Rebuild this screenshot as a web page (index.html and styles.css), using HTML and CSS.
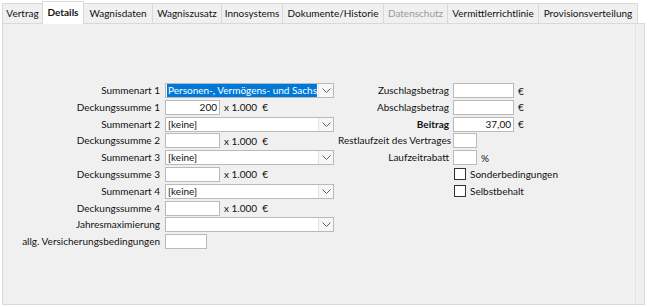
FILE: index.html
```html
<!DOCTYPE html>
<html lang="de">
<head>
<meta charset="utf-8">
<link rel="stylesheet" href="styles.css">
</head>
<body>
<div class="tabs">
  <div class="tab t1">Vertrag</div>
  <div class="tab active t2">Details</div>
  <div class="tab t3">Wagnisdaten</div>
  <div class="tab t4">Wagniszusatz</div>
  <div class="tab t5">Innosystems</div>
  <div class="tab t6">Dokumente/Historie</div>
  <div class="tab disabled t7">Datenschutz</div>
  <div class="tab t8">Vermittlerrichtlinie</div>
  <div class="tab t9">Provisionsverteilung</div>
</div>
<div class="panel">
  <div class="form">
    <div class="grid left">
      <label>Summenart 1</label>
      <div class="combo selected"><span class="val">Personen-, Vermögens- und Sachschäden</span><span class="btn"><svg width="9" height="5" viewBox="0 0 9 5"><path d="M0.5 0.5 L4.5 4.5 L8.5 0.5" fill="none" stroke="#606060" stroke-width="1"/></svg></span></div>
      <label>Deckungssumme 1</label>
      <div class="ctl"><div class="input num">200</div><span class="unit">x 1.000 &nbsp;€</span></div>
      <label>Summenart 2</label>
      <div class="combo"><span class="val">[keine]</span><span class="btn"><svg width="9" height="5" viewBox="0 0 9 5"><path d="M0.5 0.5 L4.5 4.5 L8.5 0.5" fill="none" stroke="#606060" stroke-width="1"/></svg></span></div>
      <label>Deckungssumme 2</label>
      <div class="ctl"><div class="input num"></div><span class="unit">x 1.000 &nbsp;€</span></div>
      <label>Summenart 3</label>
      <div class="combo"><span class="val">[keine]</span><span class="btn"><svg width="9" height="5" viewBox="0 0 9 5"><path d="M0.5 0.5 L4.5 4.5 L8.5 0.5" fill="none" stroke="#606060" stroke-width="1"/></svg></span></div>
      <label>Deckungssumme 3</label>
      <div class="ctl"><div class="input num"></div><span class="unit">x 1.000 &nbsp;€</span></div>
      <label>Summenart 4</label>
      <div class="combo"><span class="val">[keine]</span><span class="btn"><svg width="9" height="5" viewBox="0 0 9 5"><path d="M0.5 0.5 L4.5 4.5 L8.5 0.5" fill="none" stroke="#606060" stroke-width="1"/></svg></span></div>
      <label>Deckungssumme 4</label>
      <div class="ctl"><div class="input num"></div><span class="unit">x 1.000 &nbsp;€</span></div>
      <label>Jahresmaximierung</label>
      <div class="combo"><span class="val"></span><span class="btn"><svg width="9" height="5" viewBox="0 0 9 5"><path d="M0.5 0.5 L4.5 4.5 L8.5 0.5" fill="none" stroke="#606060" stroke-width="1"/></svg></span></div>
      <label>allg. Versicherungsbedingungen</label>
      <div class="ctl"><div class="input avb"></div></div>
    </div>
    <div class="grid right">
      <label>Zuschlagsbetrag</label>
      <div class="ctl"><div class="input amt"></div><span class="unit">€</span></div>
      <label>Abschlagsbetrag</label>
      <div class="ctl"><div class="input amt"></div><span class="unit">€</span></div>
      <label class="bold">Beitrag</label>
      <div class="ctl"><div class="input amt">37,00</div><span class="unit">€</span></div>
      <label>Restlaufzeit des Vertrages</label>
      <div class="ctl"><div class="input small"></div></div>
      <label>Laufzeitrabatt</label>
      <div class="ctl"><div class="input small"></div><span class="unit">%</span></div>
      <span></span>
      <div class="ctl check"><span class="box"></span><span>Sonderbedingungen</span></div>
      <span></span>
      <div class="ctl check"><span class="box"></span><span>Selbstbehalt</span></div>
    </div>
  </div>
</div>
</body>
</html>
```
FILE: styles.css
```css
* { box-sizing: border-box; }
html, body { margin: 0; padding: 0; background: #ffffff; }
body {
  font-family: Lato, "Open Sans", sans-serif;
  font-size: 10px;
  color: #111111;
  width: 648px;
  height: 307px;
  overflow: hidden;
}
.tabs {
  display: flex;
  align-items: flex-end;
  height: 23px;
  padding-left: 2px;
  position: relative;
  z-index: 1;
}
.tab {
  height: 20px;
  line-height: 19px;
  text-align: center;
  background: #f0f0f0;
  border: 1px solid #d9d9d9;
  border-bottom: none;
  border-left: none;
  white-space: nowrap;
  color: #111111;
}
.tab.t1 { width: 41px; border-left: 1px solid #d9d9d9; }
.tab.t2 { width: 40px; }
.tab.t3 { width: 69px; }
.tab.t4 { width: 69px; }
.tab.t5 { width: 61px; }
.tab.t6 { width: 101px; }
.tab.t7 { width: 64px; }
.tab.t8 { width: 91px; }
.tab.t9 { width: 99px; }
.tab.active {
  height: 23px;
  line-height: 21px;
  background: #ffffff;
  font-weight: 700;
  margin-bottom: -1px;
  border-left: 1px solid #d9d9d9;
  margin-left: -1px;
  width: 42px;
}
.tab.disabled { color: #9a9a9a; }
.panel {
  margin: 0 3px 0 2px;
  height: 282px;
  background: #f0f0f0;
  border: 1px solid #d9d9d9;
  box-shadow: inset -8px 0 0 #f0f0f0, inset -9px 0 0 #e3e3e3;
}
.form {
  display: flex;
  padding-top: 59px;
}
.grid {
  display: grid;
  grid-auto-rows: 15px;
  row-gap: 1.8px;
  align-items: center;
}
.left {
  margin-left: 8px;
  grid-template-columns: 149px 169px;
  column-gap: 5px;
}
.right {
  margin-left: 4px;
  grid-template-columns: 111px 150px;
  column-gap: 4px;
}
label {
  text-align: right;
  white-space: nowrap;
  line-height: 15px;
}
label.bold { font-weight: 700; }
.ctl {
  display: flex;
  align-items: center;
  height: 15px;
  white-space: nowrap;
}
.input {
  height: 15px;
  background: #ffffff;
  border: 1px solid #b9b9b9;
  line-height: 13px;
  padding: 0 2px;
}
.input.num { width: 55px; text-align: right; }
.input.avb { width: 42px; }
.input.amt { width: 61px; text-align: right; }
.input.small { width: 24px; }
.unit { margin-left: 4px; }
.combo {
  display: flex;
  height: 15px;
  width: 169px;
  background: #ffffff;
  border: 1px solid #b9b9b9;
  line-height: 13px;
}
.combo .val {
  flex: 1;
  overflow: hidden;
  white-space: nowrap;
  padding-left: 2px;
}
.combo.selected .val {
  background: #0078d7;
  color: #ffffff;
  margin: 0 1px 0 1px;
  padding-left: 1px;
}
.combo .btn {
  width: 15px;
  display: flex;
  align-items: center;
  justify-content: center;
  border-left: 1px solid #e2e2e2;
  background: #f7f7f7;
}
.check { margin-left: 1px; }
.check .box {
  width: 12px;
  height: 12px;
  border: 1px solid #333333;
  background: #ffffff;
  margin-right: 4px;
}
```
